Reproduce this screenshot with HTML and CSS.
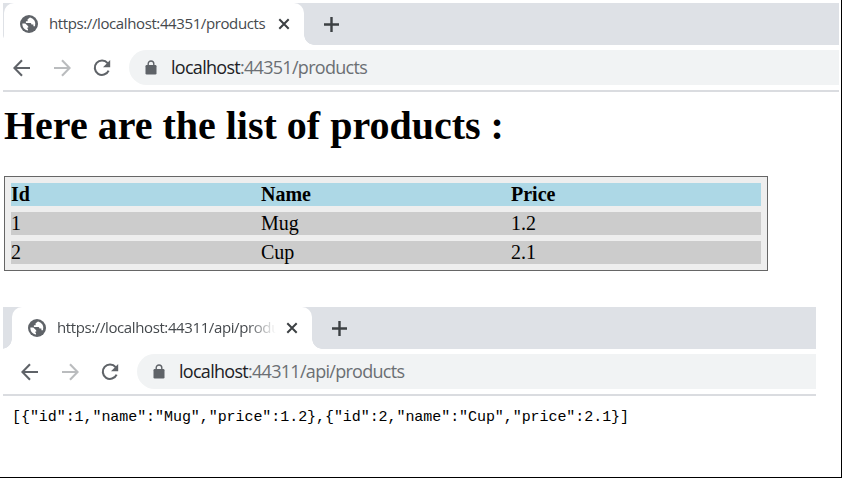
FILE: index.html
```
<!DOCTYPE html>
<html lang="en">
<head>
<meta charset="utf-8">
<title>Products</title>
<link rel="stylesheet" href="styles.css">
</head>
<body>
<svg class="defs" aria-hidden="true">
  <symbol id="globe" viewBox="0 0 18 18"><circle cx="9" cy="9" r="9" fill="#5f6368"/><path d="M10.2 2.5C9.2 2.9 8.9 3.7 7.6 4.3v1.9H5.9v1.7h4c1.1 0 1.6.7 1.6 1.7h1.9v1.6h1.6A6.6 6.6 0 0 0 10.2 2.5zM2.4 8.6h2.9l2.9 2.7v1.5H6.9l1.1 1.4v1.3C4.6 15.1 2 12.2 2.4 8.6z" fill="#fff"/></symbol>
  <symbol id="close" viewBox="0 0 12 12"><path d="M1.3 1.3l9.4 9.4M10.7 1.3l-9.4 9.4" fill="none" stroke="#3c4043" stroke-width="2"/></symbol>
  <symbol id="plus" viewBox="0 0 15 15"><path d="M7.5 0v15M0 7.5h15" fill="none" stroke="#3c4043" stroke-width="2.4"/></symbol>
  <symbol id="arrow" viewBox="0 0 18 18"><path d="M17 9H2M9 1.3L1.4 9 9 16.7" fill="none" stroke="currentColor" stroke-width="2.1"/></symbol>
  <symbol id="reload" viewBox="0 0 18 18"><path d="M14.6 4.2A7.2 7.2 0 1 0 15.6 11.6" fill="none" stroke="#5f6368" stroke-width="2.1"/><path d="M17.2 1v7.2H10z" fill="#5f6368"/></symbol>
  <symbol id="lock" viewBox="0 0 12 15"><rect x=".5" y="5" width="11" height="9.5" rx="1.2" fill="#5f6368"/><path d="M3.2 5.4V3.8a2.8 2.8 0 0 1 5.6 0v1.6" fill="none" stroke="#5f6368" stroke-width="1.4"/></symbol>
</svg>
<main class="frame">
  <section class="browser first">
    <div class="strip">
      <div class="tab">
        <svg class="globe"><use href="#globe"/></svg>
        <span class="title">https://localhost:44351/products</span>
        <svg class="close"><use href="#close"/></svg>
      </div>
      <svg class="plus"><use href="#plus"/></svg>
    </div>
    <div class="toolbar">
      <svg class="nav"><use href="#arrow"/></svg>
      <svg class="nav forward"><use href="#arrow"/></svg>
      <svg class="nav"><use href="#reload"/></svg>
      <div class="address">
        <svg class="lock"><use href="#lock"/></svg>
        <span class="url">localhost<span class="path">:44351/products</span></span>
      </div>
    </div>
    <div class="page">
      <h1>Here are the list of products :</h1>
      <div class="table">
        <div class="row head"><span>Id</span><span>Name</span><span>Price</span></div>
        <div class="row"><span>1</span><span>Mug</span><span>1.2</span></div>
        <div class="row"><span>2</span><span>Cup</span><span>2.1</span></div>
      </div>
    </div>
  </section>
  <section class="browser second">
    <div class="strip">
      <div class="tab">
        <svg class="globe"><use href="#globe"/></svg>
        <span class="title">https://localhost:44311/api/products</span>
        <svg class="close"><use href="#close"/></svg>
      </div>
      <svg class="plus"><use href="#plus"/></svg>
    </div>
    <div class="toolbar">
      <svg class="nav"><use href="#arrow"/></svg>
      <svg class="nav forward"><use href="#arrow"/></svg>
      <svg class="nav"><use href="#reload"/></svg>
      <div class="address">
        <svg class="lock"><use href="#lock"/></svg>
        <span class="url">localhost<span class="path">:44311/api/products</span></span>
      </div>
    </div>
    <pre class="json">[{"id":1,"name":"Mug","price":1.2},{"id":2,"name":"Cup","price":2.1}]</pre>
  </section>
</main>
</body>
</html>
```
FILE: styles.css
```
* { box-sizing: border-box; }
body { margin: 0; background: #fff; }
.defs { display: none; }
svg { flex: none; display: block; }

.frame {
  width: 842px;
  height: 478px;
  padding: 3px 0 0 3px;
  border-right: 1px solid #000;
  border-bottom: 1px solid #000;
  overflow: hidden;
}
.browser { overflow: hidden; }
.first { width: 836px; height: 304px; }
.second { width: 813px; }

.strip {
  display: flex;
  align-items: center;
  height: 42px;
  background: #dee1e6;
}
.first .strip { padding-left: 1px; }
.second .strip { padding-left: 9px; }
.tab {
  position: relative;
  display: flex;
  align-items: center;
  width: 300px;
  height: 42px;
  padding-left: 16px;
  background: #fff;
  border-radius: 10px 10px 0 0;
}
.tab::before, .tab::after {
  content: "";
  position: absolute;
  bottom: 0;
  width: 10px;
  height: 10px;
}
.tab::before { left: -10px; background: radial-gradient(circle at 0 0, transparent 9.5px, #fff 10px); }
.tab::after { right: -10px; background: radial-gradient(circle at 100% 0, transparent 9.5px, #fff 10px); }
.globe { width: 18px; height: 18px; }
.title {
  width: 219px;
  margin: 0 10px 0 11px;
  padding-bottom: 2px;
  overflow: hidden;
  white-space: nowrap;
  font: 15px/22px "Open Sans", sans-serif;
  letter-spacing: -0.39px;
  color: #45494d;
}
.second .title { mask-image: linear-gradient(to right, #000 190px, transparent 219px); }
.close { width: 12px; height: 12px; }
.plus { width: 15px; height: 15px; margin-left: 20px; }

.toolbar {
  display: flex;
  align-items: center;
  gap: 22px;
  height: 47px;
  padding-left: 10px;
  border-bottom: 2px solid #dadce0;
}
.second .toolbar { padding-left: 18px; }
.nav { width: 18px; height: 18px; color: #5f6368; }
.forward { color: #babcbe; transform: scaleX(-1); }
.address {
  display: flex;
  align-items: center;
  flex: 1;
  height: 35px;
  margin-left: -4px;
  padding-left: 16px;
  border-radius: 18px 0 0 18px;
  background: #f1f3f4;
}
.lock { width: 12px; height: 15px; }
.url {
  margin-left: 14px;
  padding-bottom: 1px;
  font: 18px/26px "Open Sans", sans-serif;
  letter-spacing: -0.71px;
  color: #202124;
  white-space: nowrap;
}
.path { color: #6b6f73; }

.page { padding: 11px 0 0 1px; font: 20px/23px "Liberation Serif", serif; color: #000; }
h1 { margin: 0; font-size: 40px; line-height: 46px; white-space: nowrap; }
.table {
  display: grid;
  gap: 6px;
  width: 764px;
  margin-top: 27px;
  padding: 6px;
  border: 1px solid #666;
  background: #eee;
}
.row { display: grid; grid-template-columns: repeat(3, 250px); width: 750px; height: 23px; background: #ccc; }
.head { background: #add8e6; font-weight: bold; }
.json {
  margin: 12px 0 0 9px;
  font: 15px/19px "Liberation Mono", monospace;
  letter-spacing: -0.06px;
  color: #000;
}
```
